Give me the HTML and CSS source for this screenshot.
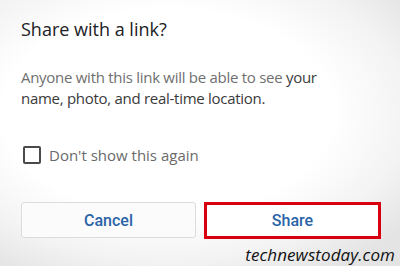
FILE: index.html
```html
<!DOCTYPE html>
<html>
<head>
<meta charset="utf-8">
<link rel="stylesheet" href="styles.css">
</head>
<body>
<div class="dialog">
  <h1 class="title">Share with a link?</h1>
  <p class="message">Anyone with this link will be able to see <span class="strong">your</span> <span class="strong">name, photo, and real-time location.</span></p>
  <label class="check-row">
    <span class="checkbox"></span>
    <span class="check-label">Don't show this again</span>
  </label>
  <div class="actions">
    <button class="btn">Cancel</button>
    <button class="btn highlight">Share</button>
  </div>
</div>
<div class="watermark">technewstoday.com</div>
</body>
</html>
```
FILE: styles.css
```css
html, body {
  margin: 0;
  padding: 0;
  width: 400px;
  height: 266px;
  overflow: hidden;
}
body {
  position: relative;
  font-family: "Open Sans", Roboto, sans-serif;
  background: radial-gradient(ellipse 75% 70% at 42% 42%, #ffffff 55%, #f3f3f3 80%, #e4e4e4 100%);
}
.dialog {
  padding: 19px 0 0 21px;
}
.title {
  margin: 0;
  font-size: 18px;
  line-height: 20px;
  font-weight: 400;
  color: #202124;
}
.message {
  margin: 28px 0 0 0;
  width: 330px;
  font-size: 15px;
  line-height: 20.5px;
  letter-spacing: -0.28px;
  color: #6f6f6f;
}
.strong {
  color: #3a3a3a;
}
.check-row {
  margin-top: 37px;
  display: flex;
  align-items: center;
  gap: 8px;
  padding-left: 2px;
  height: 20px;
}
.checkbox {
  box-sizing: border-box;
  width: 18px;
  height: 18px;
  border: 2px solid #4a4a4a;
  border-radius: 2px;
}
.check-label {
  font-size: 15px;
  line-height: 20px;
  color: #6a6a6a;
}
.actions {
  margin-top: 37px;
  display: flex;
  gap: 8px;
}
.btn {
  box-sizing: border-box;
  width: 175px;
  height: 36px;
  border: 1px solid #dcdcdc;
  border-radius: 3px;
  background: #fbfbfb;
  font-family: Roboto, "Open Sans", sans-serif;
  font-size: 16px;
  font-weight: 500;
  color: #2a63a8;
  padding: 0;
}
.highlight {
  width: 177px;
  height: 37px;
  border: 3px solid #d8000f;
  border-radius: 0;
  background: #fff;
}
.watermark {
  position: absolute;
  right: 5px;
  bottom: 1px;
  font-family: "Open Sans", sans-serif;
  font-style: italic;
  font-size: 17px;
  line-height: 21px;
  letter-spacing: 0.1px;
  color: #111;
}
```
